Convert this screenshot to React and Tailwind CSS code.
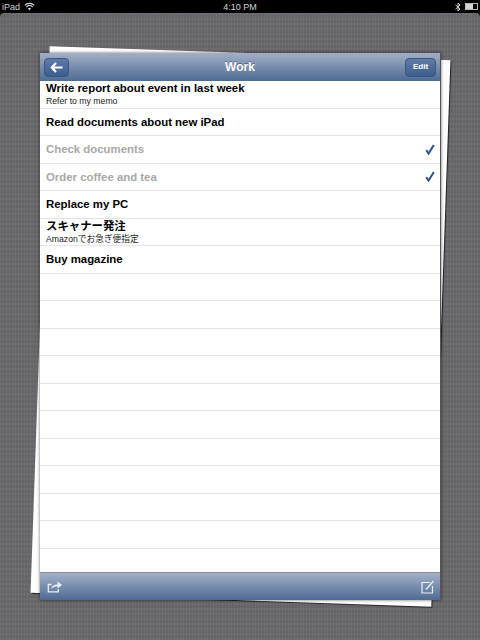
const ROWS = [
  { title: 'Write report about event in last week', sub: 'Refer to my memo' },
  { title: 'Read documents about new iPad' },
  { title: 'Check documents', done: true },
  { title: 'Order coffee and tea', done: true },
  { title: 'Replace my PC' },
  { title: 'スキャナー発注', sub: 'Amazonでお急ぎ便指定' },
  { title: 'Buy magazine' },
  {}, {}, {}, {}, {}, {}, {}, {}, {}, {},
]

const FONT = 'font-["Liberation_Sans","Noto_Sans_CJK_JP",sans-serif]'
const BAR = 'bg-[linear-gradient(#a3b0c6,#4d6b95)]'
const BTN = 'h-[19px] rounded-[4px] bg-[linear-gradient(#5f7ca5,#3c5e8d)] border border-[#3c5680] flex items-center justify-center'

function Row({ title, sub, done }) {
  return (
    <div className="h-[27.5px] shrink-0 border-b border-[#e4e4e4] pl-[6px] pr-[5px] flex items-center justify-between">
      <div className="min-w-0">
        {title && (
          <div className={`text-[11.4px] font-bold leading-[14px] ${done ? 'text-[#a8a8a8]' : 'text-black'}`}>{title}</div>
        )}
        {sub && <div className="text-[8.7px] leading-[12px] text-[#222]">{sub}</div>}
      </div>
      {done && (
        <svg width="10" height="11" viewBox="0 0 10 11" fill="none" aria-hidden>
          <path d="M1.2 6.2 3.6 9.6 8.8 1" stroke="#2c5590" strokeWidth="2" />
        </svg>
      )}
    </div>
  )
}

export default function App() {
  return (
    <div className={`${FONT} w-[480px] h-[640px] overflow-hidden flex flex-col bg-black`}>
      {/* status bar */}
      <div className="h-[13px] shrink-0 bg-black text-[#d4d4d4] text-[9px] leading-[12px] px-[2px] flex items-center">
        <div className="flex-1 flex items-center gap-[4px]">
          <span>iPad</span>
          <svg width="11" height="9" viewBox="0 0 11 9" fill="none" aria-hidden>
            <path d="M.8 3.4a6.6 6.6 0 0 1 9.400 0M2.400 5a4.400 4.400 0 0 1 6.200 0" stroke="#d4d4d4" strokeWidth="1.2" />
            <path d="M5.500 8.400 3.900 6.600a2.300 2.300 0 0 1 3.200 0z" fill="#d4d4d4" />
          </svg>
        </div>
        <span>4:10 PM</span>
        <div className="flex-1 flex items-center justify-end gap-[4px]">
          <svg width="6" height="10" viewBox="0 0 6 10" fill="none" aria-hidden>
            <path d="M.5 2.800 5 7 3 9V1l2 2L.5 7.200" stroke="#d4d4d4" strokeWidth="1" />
          </svg>
          <div className="w-[13px] h-[7px] border border-[#b8b8b8] pr-[4px]">
            <div className="h-full bg-[#d4d4d4]" />
          </div>
        </div>
      </div>

      {/* linen */}
      <div className="relative flex-1 rounded-t-[4px] overflow-hidden pt-[40px] pl-[40px] bg-[#6b6b6f] bg-[repeating-linear-gradient(0deg,rgba(255,255,255,0.02)_0px,rgba(255,255,255,0.02)_2px,rgba(0,0,0,0.03)_2px,rgba(0,0,0,0.03)_5px),repeating-linear-gradient(90deg,rgba(255,255,255,0.025)_0px,rgba(255,255,255,0.025)_1px,rgba(0,0,0,0.035)_1px,rgba(0,0,0,0.035)_3px)]">
        <div className="absolute left-[40px] top-[40px] w-[401px] h-[547px] rotate-2 bg-white shadow-[1px_1px_1px_rgba(0,0,0,0.7)]" />
        <div className="relative w-[401px] h-[547px] flex flex-col bg-white border-r border-[#555] shadow-[0_0_3px_rgba(0,0,0,0.6)]">
          <div className={`${BAR} h-[28px] shrink-0 px-[4px] flex items-center`}>
            <div className="flex-1 flex">
              <div className={`${BTN} w-[25px]`}>
                <svg width="13" height="11" viewBox="0 0 13 11" fill="none" aria-hidden>
                  <path d="M6 1 1.800 5.500 6 10M2 5.500h10.500" stroke="#fff" strokeWidth="2.200" />
                </svg>
              </div>
            </div>
            <span className="text-[12px] font-bold text-white [text-shadow:0_-1px_0_rgba(0,0,0,0.35)]">Work</span>
            <div className="flex-1 flex justify-end">
              <div className={`${BTN} w-[31px] text-[8px] font-bold text-white`}>Edit</div>
            </div>
          </div>

          <div className="flex-1 min-h-0 overflow-hidden flex flex-col">
            {ROWS.map((r, i) => <Row key={i} {...r} />)}
          </div>

          <div className={`${BAR} h-[28px] shrink-0 border-t border-[#8a8a8a] pl-[7px] pr-[5px] flex items-center justify-between`}>
            <svg width="16" height="13" viewBox="0 0 15 13" fill="none" aria-hidden>
              <path d="M4 4.500H.8v7.400h10V9" stroke="#e8edf5" strokeWidth="1.300" />
              <path d="M3.500 9c.5-3 3-4.600 6.500-4.600V1.600L14.500 5 10 8.400V6.200C7.500 6.200 5.500 7 3.500 9z" fill="#e8edf5" />
            </svg>
            <svg width="14" height="14" viewBox="0 0 14 14" fill="none" aria-hidden>
              <path d="M9 2.500H1v10.500h10.500V6" stroke="#e8edf5" strokeWidth="1.200" />
              <path d="M5 9.500 12.500 1" stroke="#e8edf5" strokeWidth="1.400" />
            </svg>
          </div>
        </div>
      </div>
    </div>
  )
}
